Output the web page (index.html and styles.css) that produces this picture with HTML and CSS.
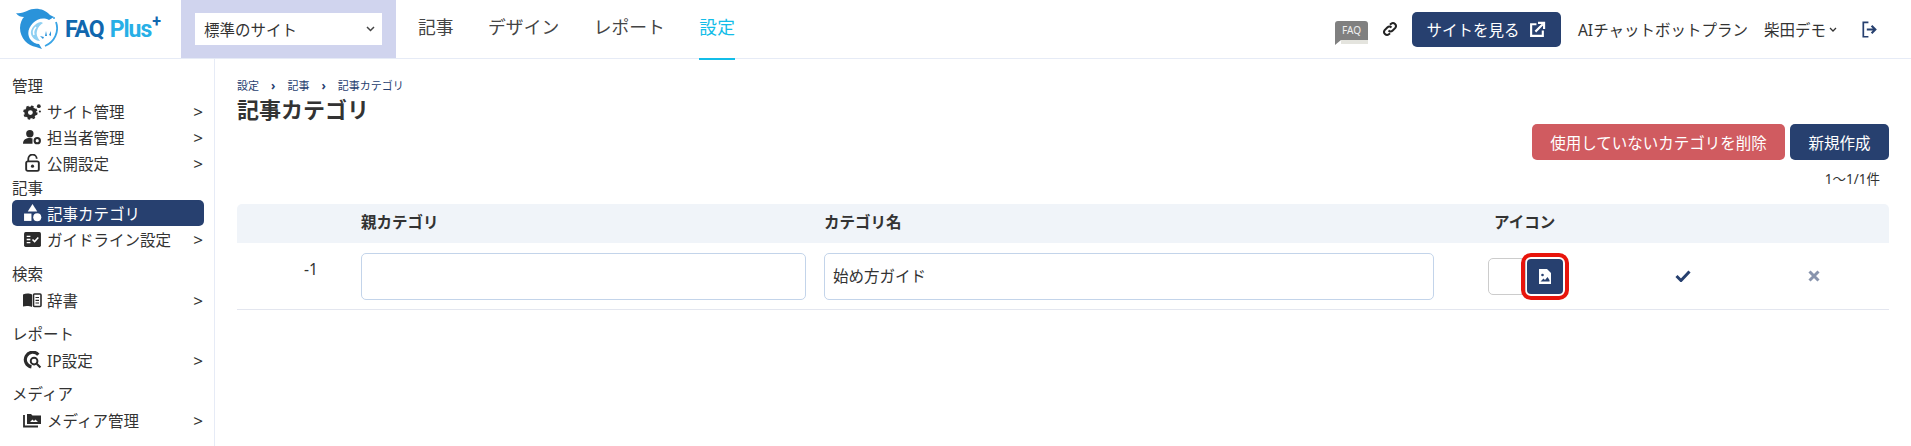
FILE: index.html
```html
<!DOCTYPE html>
<html lang="ja">
<head>
    <meta charset="UTF-8">
    <title>記事カテゴリ</title>
    <link rel="stylesheet" href="styles.css">
</head>
<body>
    <header class="topbar">
        <a class="logo">
            <svg class="logo-mark" width="42" height="42" viewBox="0 0 42 42">
                <path d="M40 14A19 19 0 0 1 29 38" fill="none" stroke="#3aa5e6" stroke-width="1.800"/>
                <path d="M0 5C4 6 8 4 11 3 18-1 28 0 34 7l4 2-5 3C27 9 21 11 17 15 12 20 11 26 14 31c2 3 6 5 9 5l3 5-6-2C12 38 4 30 4 20 4 15 6 11 8 9 5 9 2 8 0 5z" fill="#2a93da"/>
                <path d="M25 14C19 15 14 21 15 26c1 4 5 7 9 7-3-4-4-7-3-10 1-4 3-6 6-8z" fill="#8fd0f2"/>
                <path d="M20 19c-2 2-3 5-2 8" fill="none" stroke="#fff" stroke-width="1.500"/>
                <path d="M29 28l1-5 1 5zM33 27l2-4v5zM27 31l-3-3 4 1z" fill="#2a93da"/>
                <circle cx="38" cy="10" r="1" fill="#3aa5e6"/>
            </svg>
            <span class="logo-faq">FAQ</span><span class="logo-plus">Plus</span><sup class="logo-sup">+</sup>
        </a>
        <div class="site-switch">
            <div class="site-select">
                <span>標準のサイト</span>
                <svg width="9" height="6" viewBox="0 0 9 6"><path d="M1 1l3.500 3.500L8 1" fill="none" stroke="#444" stroke-width="1.500"/></svg>
            </div>
        </div>
        <nav class="main-nav">
            <a>記事</a>
            <a>デザイン</a>
            <a>レポート</a>
            <a class="current">設定</a>
        </nav>
        <div class="top-right">
            <div class="faq-badge"><span>FAQ</span></div>
            <svg class="link-icon" width="16" height="16" viewBox="0 0 16 16">
                <path d="M6.500 9.500a3 3 0 0 0 4.200 0l2.600-2.600a3 3 0 0 0-4.200-4.200L8 3.800M9.500 6.500a3 3 0 0 0-4.200 0L2.700 9.100a3 3 0 0 0 4.200 4.200L8 12.200" fill="none" stroke="#222" stroke-width="2"/>
            </svg>
            <a class="view-site">サイトを見る
                <svg width="17" height="17" viewBox="0 0 16 16">
                    <path d="M7 3H2v11h11V9" fill="none" stroke="#fff" stroke-width="2"/>
                    <path d="M6 10l7-7M8.500 1.800h5.700v5.700" fill="none" stroke="#fff" stroke-width="2"/>
                </svg>
            </a>
            <span class="plan">AIチャットボットプラン</span>
            <span class="user">柴田デモ
                <svg width="8" height="5" viewBox="0 0 8 5"><path d="M1 1l3 3 3-3" fill="none" stroke="#333" stroke-width="1.300"/></svg>
            </span>
            <svg class="logout" width="16" height="17" viewBox="0 0 15 16">
                <path d="M6 1.200H1.200v13.600H6" fill="none" stroke="#27406f" stroke-width="1.600"/>
                <path d="M4.500 8h7M9 4.500L12.500 8 9 11.500" fill="none" stroke="#27406f" stroke-width="2"/>
            </svg>
        </div>
    </header>

    <div class="layout">
        <aside class="sidebar">
            <div class="side-label">管理</div>
            <a class="side-item">
                <svg width="19" height="17" viewBox="0 0 18 16"><circle cx="7" cy="9" r="4" fill="none" stroke="#2b2b2b" stroke-width="3.400"/><circle cx="7" cy="9" r="6" fill="none" stroke="#2b2b2b" stroke-width="1.600" stroke-dasharray="2.400 2.300"/><circle cx="15" cy="3" r="1.800" fill="#2b2b2b"/><circle cx="16" cy="8" r="1" fill="#2b2b2b"/></svg>
                <span>サイト管理</span><i>&gt;</i>
            </a>
            <a class="side-item">
                <svg width="19" height="17" viewBox="0 0 18 16"><circle cx="6.500" cy="4.500" r="3.500" fill="#2b2b2b"/><path d="M0 14c0-4 3-5.500 6.500-5.500 1 0 2 .2 2.500.4V14z" fill="#2b2b2b"/><circle cx="13.500" cy="11" r="2.500" fill="none" stroke="#2b2b2b" stroke-width="2"/></svg>
                <span>担当者管理</span><i>&gt;</i>
            </a>
            <a class="side-item">
                <svg width="19" height="18" viewBox="0 0 18 17"><path d="M5 7V4.500a4 4 0 0 1 8 0" fill="none" stroke="#2b2b2b" stroke-width="1.700"/><rect x="3" y="7" width="12" height="9" rx="1.500" fill="none" stroke="#2b2b2b" stroke-width="1.800"/><circle cx="9" cy="11.500" r="1.500" fill="#2b2b2b"/></svg>
                <span>公開設定</span><i>&gt;</i>
            </a>
            <div class="side-label">記事</div>
            <a class="side-item active">
                <svg width="19" height="18" viewBox="0 0 18 17"><path d="M9 0l4.500 7h-9z" fill="#fff"/><rect x="1" y="9" width="7" height="7" fill="#fff"/><circle cx="13.500" cy="12.500" r="3.800" fill="#fff"/></svg>
                <span>記事カテゴリ</span>
            </a>
            <a class="side-item">
                <svg width="19" height="17" viewBox="0 0 18 16"><rect x="1" y="1" width="16" height="14" rx="1.500" fill="#2b2b2b"/><path d="M3.500 5H7M3.500 8H7M3.500 11H7" stroke="#fff" stroke-width="1.200"/><path d="M9 8l2 2 3.500-4" fill="none" stroke="#fff" stroke-width="1.400"/></svg>
                <span>ガイドライン設定</span><i>&gt;</i>
            </a>
            <div class="side-label gap">検索</div>
            <a class="side-item">
                <svg width="19" height="15" viewBox="0 0 19 15"><path d="M0 1.500C3 0 7 .5 9 1.500V14C7 13 3 12.500 0 13.500z" fill="#2b2b2b"/><rect x="10.500" y="1" width="7.500" height="12.500" rx="1" fill="none" stroke="#2b2b2b" stroke-width="1.600"/><path d="M12.500 4.500h3.500M12.500 7.300h3.500M12.500 10h3.500" stroke="#2b2b2b" stroke-width="1.200"/></svg>
                <span>辞書</span><i>&gt;</i>
            </a>
            <div class="side-label gap">レポート</div>
            <a class="side-item">
                <svg width="19" height="18" viewBox="0 0 18 17"><path d="M14.500 3.500A7 7 0 1 0 8 15" fill="none" stroke="#2b2b2b" stroke-width="3"/><circle cx="10.500" cy="9.500" r="3.200" fill="none" stroke="#2b2b2b" stroke-width="1.800"/><path d="M13 12l3.500 3.500" stroke="#2b2b2b" stroke-width="2"/></svg>
                <span>IP設定</span><i>&gt;</i>
            </a>
            <div class="side-label gap">メディア</div>
            <a class="side-item">
                <svg width="19" height="16" viewBox="0 0 19 16"><path d="M1 3v11.500h14" fill="none" stroke="#2b2b2b" stroke-width="1.800"/><path d="M4 2h4l1.500 1.500H18V12H4z" fill="#2b2b2b"/><path d="M7 10l2.500-2.500L11 9l1.500-1.500L15 10z" fill="#fff"/></svg>
                <span>メディア管理</span><i>&gt;</i>
            </a>
        </aside>

        <main class="content">
            <div class="breadcrumb">
                <span>設定</span><b>›</b><span>記事</span><b>›</b><span>記事カテゴリ</span>
            </div>
            <h1>記事カテゴリ</h1>
            <div class="actions">
                <button class="btn btn-red">使用していないカテゴリを削除</button>
                <button class="btn btn-navy">新規作成</button>
            </div>
            <div class="count">1～1/1件</div>
            <div class="table">
                <div class="row head">
                    <div></div>
                    <div>親カテゴリ</div>
                    <div>カテゴリ名</div>
                    <div>アイコン</div>
                    <div></div>
                    <div></div>
                </div>
                <div class="row body">
                    <div class="cell-id">-1</div>
                    <div><input class="field field-parent" type="text"></div>
                    <div><input class="field field-name" type="text" value="始め方ガイド"></div>
                    <div class="icon-group">
                        <span class="icon-preview"></span>
                        <button class="icon-btn">
                            <svg width="12" height="15" viewBox="0 0 12 15">
                                <path d="M0 0h8l4 4v11H0z" fill="#fff"/>
                                <circle cx="3.500" cy="6" r="1.300" fill="#27406f"/>
                                <path d="M1.500 12.500l3-3 1.500 1.500 2.500-3 2 3v1.500z" fill="#27406f"/>
                            </svg>
                        </button>
                    </div>
                    <div class="cell-check">
                        <svg width="16" height="12" viewBox="0 0 16 12"><path d="M1.500 6l4.500 4.500L14.500 1.500" fill="none" stroke="#27406f" stroke-width="3"/></svg>
                    </div>
                    <div class="cell-close">
                        <svg width="12" height="12" viewBox="0 0 12 12"><path d="M1.500 1.500l9 9M10.500 1.500l-9 9" fill="none" stroke="#8894ad" stroke-width="3"/></svg>
                    </div>
                </div>
            </div>
        </main>
    </div>
</body>
</html>
```

FILE: styles.css
```css
* {
    box-sizing: border-box;
}
html, body {
    height: 100%;
}
body {
    margin: 0;
    overflow: hidden;
    font-family: "Noto Sans", "Noto Sans CJK JP", sans-serif;
    font-size: 15.500px;
    color: #333;
    background-color: #fff;
}
.topbar {
    display: flex;
    align-items: center;
    height: 59px;
    border-bottom: 1px solid #e6ebf6;
}
.logo {
    display: flex;
    align-items: center;
    flex: none;
    width: 181px;
    padding-left: 16px;
    font-family: Roboto, sans-serif;
    font-weight: 700;
    font-size: 23px;
    letter-spacing: -1px;
}
.logo-mark {
    margin-right: 7px;
    flex: none;
}
.logo-faq {
    color: #1167ae;
    margin-right: 6px;
}
.logo-plus {
    color: #27afe6;
}
.logo-sup {
    color: #1167ae;
    font-size: 16px;
    line-height: 1;
    margin-top: -14px;
    margin-left: 1px;
}
.site-switch {
    display: flex;
    align-items: center;
    flex: none;
    width: 215px;
    height: 58px;
    padding: 0 14px;
    align-self: flex-start;
    background-color: #d0d4ee;
}
.site-select {
    display: flex;
    align-items: center;
    justify-content: space-between;
    width: 187px;
    height: 32px;
    padding: 0 7px 0 9px;
    background-color: #fff;
}
.main-nav {
    display: flex;
    align-self: flex-start;
    gap: 34.500px;
    margin-left: 22px;
    height: 60px;
}
.main-nav a {
    display: block;
    height: 60px;
    line-height: 55px;
    font-size: 17.800px;
    color: #444;
}
.main-nav a.current {
    color: #13bde8;
    border-bottom: 2px solid #13bde8;
}
.top-right {
    display: flex;
    align-items: center;
    margin-left: auto;
    padding-right: 33px;
}
.faq-badge {
    position: relative;
    width: 33px;
    height: 19px;
    margin-top: 3px;
    margin-right: 14px;
    border-radius: 3px 3px 0 0;
    background-color: #808080;
    color: #f0f0f0;
    font-size: 10px;
    line-height: 19px;
    text-align: center;
}
.faq-badge::before {
    content: "";
    position: absolute;
    left: 6px;
    right: 0;
    top: 19px;
    height: 4px;
    background-color: #e4e4de;
}
.faq-badge::after {
    content: "";
    position: absolute;
    left: 0;
    top: 19px;
    border-top: 5px solid #808080;
    border-right: 6px solid transparent;
}
.link-icon {
    margin-right: 14px;
}
.view-site {
    display: flex;
    align-items: center;
    justify-content: center;
    gap: 10px;
    width: 149px;
    height: 35px;
    margin-right: 17px;
    border-radius: 5px;
    background-color: #27406f;
    color: #fff;
}
.plan {
    margin-right: 16px;
}
.user {
    display: flex;
    align-items: center;
    gap: 3px;
    margin-right: 25px;
}
.logout {
    flex: none;
}
.layout {
    display: flex;
    height: 387px;
}
.sidebar {
    flex: none;
    width: 215px;
    padding: 15px 10px 0 12px;
    border-right: 1px solid #e6ebf6;
}
.side-label {
    height: 24px;
    line-height: 24px;
}
.side-label.gap {
    height: 26px;
    line-height: 26px;
    margin-top: 8px;
}
.side-item:nth-child(7) + .side-label.gap {
    margin-top: 9px;
}
.side-item {
    display: flex;
    align-items: center;
    height: 26px;
    padding: 0 1px 0 11px;
    border-radius: 5px;
}
.side-item svg {
    flex: none;
    margin-right: 5px;
}
.side-item span {
    flex: 1;
}
.side-item i {
    font-style: normal;
    font-size: 17px;
}
.side-item.active {
    background-color: #27406f;
    color: #fff;
}
.content {
    flex: 1;
    padding: 18px 22px 0 22px;
}
.breadcrumb {
    display: flex;
    align-items: center;
    gap: 12px;
    height: 16px;
    font-size: 11px;
    color: #27406f;
}
.breadcrumb b {
    font-weight: 700;
    font-size: 12px;
}
h1 {
    margin: 0;
    height: 32px;
    line-height: 32px;
    font-size: 22px;
    font-weight: 700;
    color: #333;
}
.actions {
    display: flex;
    justify-content: flex-end;
    gap: 5px;
    margin-top: -1px;
}
.btn {
    height: 36px;
    border: none;
    border-radius: 5px;
    color: #fff;
    font-family: inherit;
    font-size: 15.500px;
}
.btn-red {
    width: 253px;
    background-color: #d05b60;
}
.btn-navy {
    width: 99px;
    background-color: #27406f;
}
.count {
    height: 44px;
    padding: 10px 9px 0 0;
    line-height: 18px;
    text-align: right;
    font-size: 13.500px;
}
.row {
    display: grid;
    grid-template-columns: 124px 463px 670px 100px 178px 1fr;
    align-items: center;
}
.row.head {
    height: 39px;
    padding-bottom: 4px;
    border-radius: 5px 5px 0 0;
    background-color: #f0f4f9;
    font-weight: 700;
}
.row.body {
    height: 67px;
    border-bottom: 1px solid #e3e6ef;
}
.cell-id {
    padding-left: 67px;
    margin-top: -14px;
}
.field {
    display: block;
    height: 47px;
    padding: 0 8px 2px;
    border: 1px solid #c3d4ea;
    border-radius: 5px;
    font-family: inherit;
    font-size: 15.500px;
    color: #333;
}
.field-parent {
    width: 445px;
}
.field-name {
    width: 610px;
}
.icon-group {
    display: flex;
    align-items: center;
    margin-left: -6px;
}
.icon-preview {
    flex: none;
    width: 38px;
    height: 37px;
    border: 1px solid #ccc;
    border-radius: 5px;
}
.icon-btn {
    display: flex;
    align-items: center;
    justify-content: center;
    flex: none;
    width: 36px;
    height: 35px;
    margin-left: 1px;
    padding: 0;
    border: none;
    border-radius: 4px;
    background-color: #27406f;
    outline: 4px solid #e8150c;
    outline-offset: 2px;
}
.cell-check {
    display: flex;
    justify-content: center;
}
.cell-close {
    display: flex;
    justify-content: center;
    padding-right: 33px;
}
```
